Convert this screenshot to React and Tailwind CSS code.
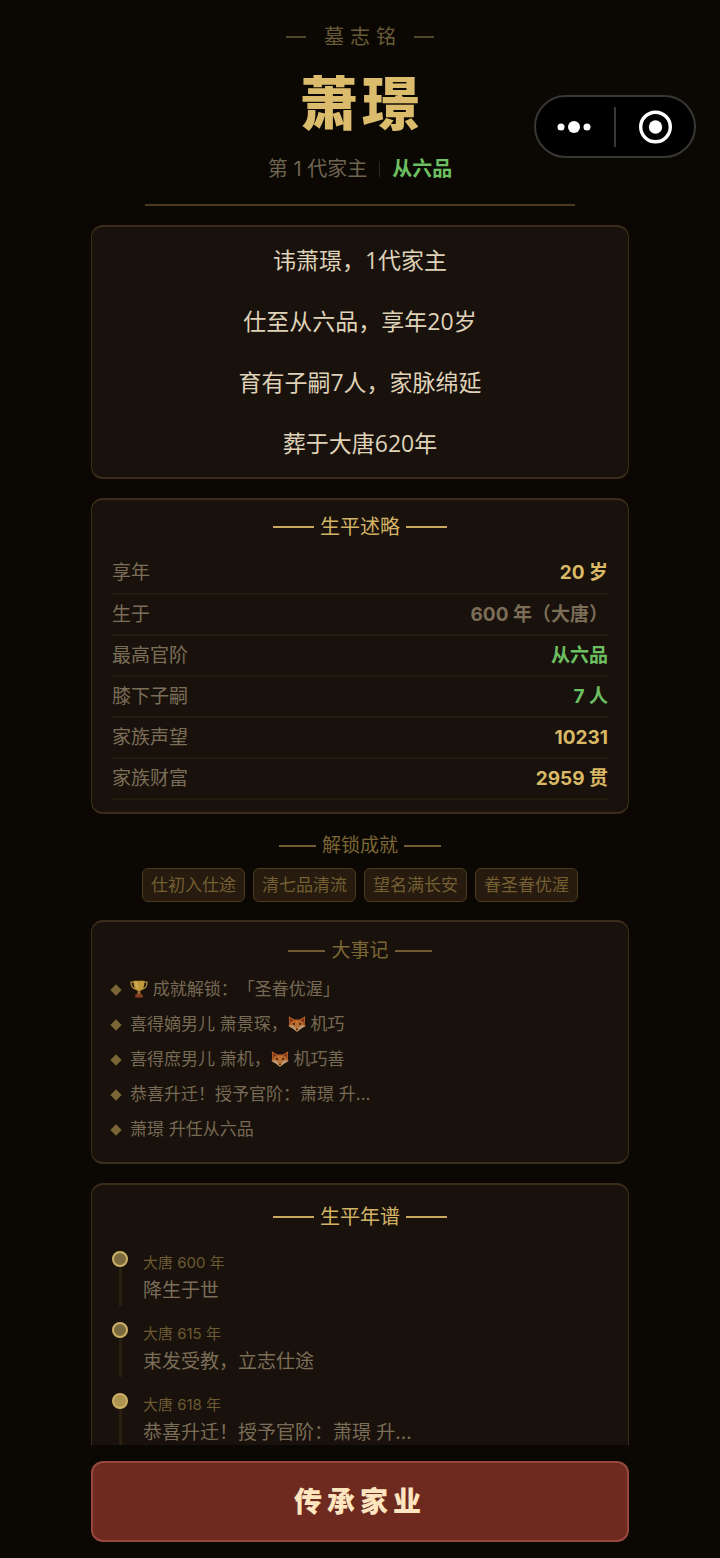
const eulogy = [
  '讳萧璟，1代家主',
  '仕至从六品，享年20岁',
  '育有子嗣7人，家脉绵延',
  '葬于大唐620年'
]

const stats = [
  { label: '享年', value: '20 岁', color: 'text-[#d9b966]' },
  { label: '生于', value: '600 年（大唐）', color: 'text-[#7b6e58]' },
  { label: '最高官阶', value: '从六品', color: 'text-[#6cc062]' },
  { label: '膝下子嗣', value: '7 人', color: 'text-[#6cc062]' },
  { label: '家族声望', value: '10231', color: 'text-[#d9b966]' },
  { label: '家族财富', value: '2959 贯', color: 'text-[#d9b966]' }
]

const achievements = ['仕初入仕途', '清七品清流', '望名满长安', '眷圣眷优渥']

const events = [
  { id: 1, text: <><Trophy /> 成就解锁：「圣眷优渥」</> },
  { id: 2, text: <>喜得嫡男儿 萧景琛，<Fox /> 机巧</> },
  { id: 3, text: <>喜得庶男儿 萧机，<Fox /> 机巧善</> },
  { id: 4, text: '恭喜升迁！授予官阶：萧璟 升...' },
  { id: 5, text: '萧璟 升任从六品' }
]

const timeline = [
  { year: '大唐 600 年', text: '降生于世', dot: 'bg-[#7c6a3f]' },
  { year: '大唐 615 年', text: '束发受教，立志仕途', dot: 'bg-[#7c6a3f]' },
  { year: '大唐 618 年', text: '恭喜升迁！授予官阶：萧璟 升...', dot: 'bg-[#ae954f]' }
]

function Trophy() {
  return (
    <svg viewBox="0 0 18 18" className="inline-block w-[18px] h-[18px] align-[-3px]" aria-hidden="true">
      <path d="M4.500 2.200H1c0 3.800 1.400 6.300 5 6.800M13.500 2.200H17c0 3.800-1.400 6.300-5 6.800" fill="none" stroke="#b08c38" strokeWidth="1.300" />
      <path d="M3.500.8h11c0 5.200-1 8.600-4.200 10.200H7.700C4.500 9.400 3.500 6 3.500.8z" fill="#c09a3d" />
      <path d="M5.300 1.800h1.800c0 3.200.4 5.500 1.300 7.600C6.400 8.200 5.400 5.600 5.300 1.800z" fill="#d3b25c" />
      <path d="M7.900 10.500h2.200l.6 4H7.300z" fill="#a3702c" />
      <path d="M5.800 14.200h6.400l.9 3.300H4.900z" fill="#8a3f22" />
    </svg>
  )
}

function Fox() {
  return (
    <svg viewBox="0 0 18 18" className="inline-block w-[18px] h-[18px] align-[-3px]" aria-hidden="true">
      <path d="M.8 1.200 6.300 4.500h5.400l5.500-3.300-.4 7.300.7 2.500-4.300 2.400L9 17l-4.200-3.600L.5 11l.7-2.500z" fill="#b46128" />
      <path d="M1.900 2.900 5 5.200 2.300 7.500zM16.100 2.900 13 5.200l2.700 2.300z" fill="#7a2818" />
      <path d="M.6 11.200l3.600-1.500 3.200 2.600L9 16.800l-4.200-3.400zM17.400 11.200l-3.600-1.500-3.200 2.600L9 16.800l4.200-3.400z" fill="#b79a72" />
      <path d="M7.200 6h3.600l-.2 5.500L9 15l-1.600-3.500z" fill="#bb7433" />
      <circle cx="5.900" cy="8.900" r=".9" fill="#24140a" />
      <circle cx="12.100" cy="8.900" r=".9" fill="#24140a" />
      <path d="M7.800 13.800h2.400L9 15.400z" fill="#24140a" />
    </svg>
  )
}

function Card({ children, className = '' }) {
  return (
    <section className={`rounded-xl border-x border-y-2 border-[#3b2d1a] bg-[#19110b] ${className}`}>
      {children}
    </section>
  )
}

function Heading({ children, muted = false }) {
  const rule = muted ? 'w-[37px] h-0.5 bg-[#6f5c31]' : 'w-[41px] h-0.5 bg-[#c9a95e]'
  return (
    <h2
      className={`flex items-center justify-center gap-1.5 leading-[30px] ${
        muted ? 'text-[19px] text-[#7b6635]' : 'text-[20px] text-[#d2b365]'
      }`}
    >
      <span className={rule} />
      {children}
      <span className={rule} />
    </h2>
  )
}

function Capsule() {
  return (
    <div className="absolute top-[95px] right-6 z-10 flex h-[63px] w-[162px] items-center rounded-full border-2 border-[#393734] bg-black">
      <button type="button" aria-label="更多" className="flex h-full flex-1 items-center justify-center">
        <svg viewBox="0 0 36 14" className="w-9 h-3.5" fill="#fff">
          <circle cx="4" cy="7" r="3.500" />
          <circle cx="17" cy="7" r="6" />
          <circle cx="30" cy="7" r="3.500" />
        </svg>
      </button>
      <span className="h-10 w-0.5 bg-[#393734]" />
      <button type="button" aria-label="关闭" className="flex h-full flex-1 items-center justify-center">
        <svg viewBox="0 0 34 34" className="w-[34px] h-[34px]">
          <circle cx="17.500" cy="17" r="14.800" fill="none" stroke="#fff" strokeWidth="3.400" />
          <circle cx="17.500" cy="17" r="6.700" fill="#fff" />
        </svg>
      </button>
    </div>
  )
}

export default function App() {
  return (
    <div
      lang="zh-CN"
      className='relative flex h-screen flex-col bg-[#0b0803] font-["Inter","Noto_Sans_CJK_SC",sans-serif] [text-spacing-trim:space-all]'
    >
      <Capsule />

      <main className="min-h-0 flex-1 overflow-y-auto px-[91px] pt-5 [scrollbar-width:none]">
        <header className="text-center">
          <p className="flex items-center justify-center gap-[18px] text-[20px] leading-[34px] text-[#6a5b37]">
            <span className="h-0.5 w-5 bg-[#4f4529]" />
            <span className="-mr-1.5 tracking-[6px]">墓志铭</span>
            <span className="h-0.5 w-5 bg-[#4f4529]" />
          </p>
          <h1 className="mt-2.5 pl-1 text-[58px] leading-[80px] font-black tracking-[4px] text-[#dbbb6c]">萧璟</h1>
          <p className="mt-2.5 flex items-center justify-center gap-3 text-[20px] leading-[30px] text-[#6f6450]">
            <span>第 1 代家主</span>
            <span className="h-4 w-px bg-[#2d2619]" />
            <span className="font-bold text-[#6cc062]">从六品</span>
          </p>
          <div className="mx-auto mt-5 h-0.5 w-4/5 bg-[#4b3a20]" />
        </header>

        <Card className="mt-[19px] py-[3px]">
          {eulogy.map((line) => (
            <p key={line} className='text-center text-[23px] leading-[61px] text-[#dfd2b8] font-["Open_Sans","Noto_Sans_CJK_SC",sans-serif]'>{line}</p>
          ))}
        </Card>

        <Card className="mt-[19px] px-5 pt-3 pb-3">
          <Heading>生平述略</Heading>
          <table className="mt-[11px] w-full text-[19px]">
            <tbody>
              {stats.map((s) => (
                <tr key={s.label} className="h-[41px] border-b-2 border-[#231a10]">
                  <th scope="row" className="p-0 text-left leading-7 font-normal text-[#7b6e58]">{s.label}</th>
                  <td className={`p-0 text-right leading-7 font-bold ${s.color}`}>{s.value}</td>
                </tr>
              ))}
            </tbody>
          </table>
        </Card>

        <section className="pt-[17px] pb-[18px]">
          <Heading muted>解锁成就</Heading>
          <ul className="mt-[7px] flex flex-wrap justify-center gap-2">
            {achievements.map((a) => (
              <li key={a} className="rounded-md border border-[#4b3a1d] bg-[#261b0e] px-2 text-[17px] leading-8 text-[#745f32]">{a}</li>
            ))}
          </ul>
        </section>

        <Card className="px-5 pt-3.5 pb-[15px]">
          <Heading muted>大事记</Heading>
          <ul className="mt-1.5">
            {events.map((e) => (
              <li key={e.id} className="flex items-center gap-2.5 text-[17px] leading-[35px] text-[#766a54]">
                <span className="size-2 shrink-0 rotate-45 bg-[#7a6537]" />
                <span className="truncate">{e.text}</span>
              </li>
            ))}
          </ul>
        </Card>

        <Card className="mt-[19px] px-5 pt-[17px] pb-4">
          <Heading>生平年谱</Heading>
          <ol className="mt-[19px]">
            {timeline.map((t) => (
              <li key={t.year} className="flex gap-[15px] pb-4">
                <div className="flex w-4 flex-col items-center">
                  <span className={`size-4 shrink-0 rounded-full border-2 border-[#cdb068] ${t.dot}`} />
                  <span className="w-[3px] flex-1 bg-[#2a2011]" />
                </div>
                <div className="min-w-0 flex-1">
                  <p className="text-[15px] leading-6 text-[#6c5a33]">{t.year}</p>
                  <p className="truncate text-[19px] leading-[31px] text-[#7b6e58]">{t.text}</p>
                </div>
              </li>
            ))}
          </ol>
        </Card>
      </main>

      <footer className="shrink-0 px-[91px] py-4">
        <button
          type="button"
          className="h-[81px] w-full rounded-xl border-2 border-[#97483d] bg-[#6e2a1f] text-[28px] font-black tracking-[5px] text-[#fde5c0]"
        >
          传承家业
        </button>
      </footer>
    </div>
  )
}
